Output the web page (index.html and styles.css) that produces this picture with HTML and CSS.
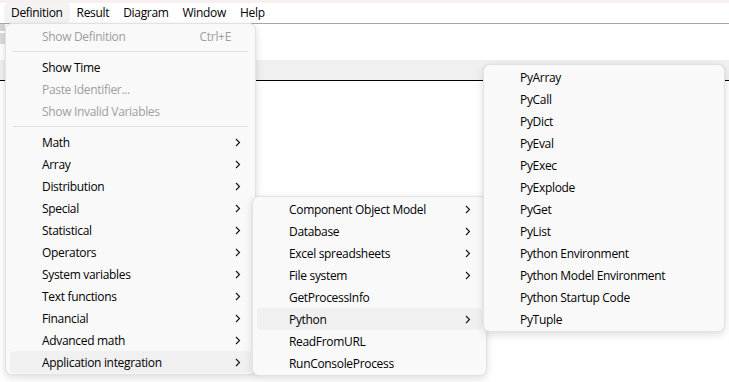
FILE: index.html
```html
<!DOCTYPE html>
<html>
<head>
<meta charset="utf-8">
<link rel="stylesheet" href="styles.css">
</head>
<body>
<div class="window">
  <div class="topstrip"></div>
  <div class="menubar">
    <span class="mb-item active">Definition</span>
    <span class="mb-item">Result</span>
    <span class="mb-item">Diagram</span>
    <span class="mb-item">Window</span>
    <span class="mb-item">Help</span>
  </div>
  <div class="toolbar">
    <div class="tool-edge">
      <span class="edge-a"></span>
      <span class="edge-b"></span>
    </div>
  </div>
  <div class="band"></div>
  <div class="content"></div>
</div>

<div class="menu menu-main">
  <div class="item disabled"><span class="label">Show Definition</span><span class="shortcut">Ctrl+E</span></div>
  <div class="sep"></div>
  <div class="item"><span class="label">Show Time</span></div>
  <div class="item disabled"><span class="label">Paste Identifier...</span></div>
  <div class="item disabled"><span class="label">Show Invalid Variables</span></div>
  <div class="sep"></div>
  <div class="item"><span class="label">Math</span><svg class="arrow" width="6" height="9" viewBox="0 0 6 9"><path d="M1 1 L4.5 4.5 L1 8"/></svg></div>
  <div class="item"><span class="label">Array</span><svg class="arrow" width="6" height="9" viewBox="0 0 6 9"><path d="M1 1 L4.5 4.5 L1 8"/></svg></div>
  <div class="item"><span class="label">Distribution</span><svg class="arrow" width="6" height="9" viewBox="0 0 6 9"><path d="M1 1 L4.5 4.5 L1 8"/></svg></div>
  <div class="item"><span class="label">Special</span><svg class="arrow" width="6" height="9" viewBox="0 0 6 9"><path d="M1 1 L4.5 4.5 L1 8"/></svg></div>
  <div class="item"><span class="label">Statistical</span><svg class="arrow" width="6" height="9" viewBox="0 0 6 9"><path d="M1 1 L4.5 4.5 L1 8"/></svg></div>
  <div class="item"><span class="label">Operators</span><svg class="arrow" width="6" height="9" viewBox="0 0 6 9"><path d="M1 1 L4.5 4.5 L1 8"/></svg></div>
  <div class="item"><span class="label">System variables</span><svg class="arrow" width="6" height="9" viewBox="0 0 6 9"><path d="M1 1 L4.5 4.5 L1 8"/></svg></div>
  <div class="item"><span class="label">Text functions</span><svg class="arrow" width="6" height="9" viewBox="0 0 6 9"><path d="M1 1 L4.5 4.5 L1 8"/></svg></div>
  <div class="item"><span class="label">Financial</span><svg class="arrow" width="6" height="9" viewBox="0 0 6 9"><path d="M1 1 L4.5 4.5 L1 8"/></svg></div>
  <div class="item"><span class="label">Advanced math</span><svg class="arrow" width="6" height="9" viewBox="0 0 6 9"><path d="M1 1 L4.5 4.5 L1 8"/></svg></div>
  <div class="item hover"><span class="label">Application integration</span><svg class="arrow" width="6" height="9" viewBox="0 0 6 9"><path d="M1 1 L4.5 4.5 L1 8"/></svg></div>
</div>

<div class="menu menu-app">
  <div class="item"><span class="label">Component Object Model</span><svg class="arrow" width="6" height="9" viewBox="0 0 6 9"><path d="M1 1 L4.5 4.5 L1 8"/></svg></div>
  <div class="item"><span class="label">Database</span><svg class="arrow" width="6" height="9" viewBox="0 0 6 9"><path d="M1 1 L4.5 4.5 L1 8"/></svg></div>
  <div class="item"><span class="label">Excel spreadsheets</span><svg class="arrow" width="6" height="9" viewBox="0 0 6 9"><path d="M1 1 L4.5 4.5 L1 8"/></svg></div>
  <div class="item"><span class="label">File system</span><svg class="arrow" width="6" height="9" viewBox="0 0 6 9"><path d="M1 1 L4.5 4.5 L1 8"/></svg></div>
  <div class="item"><span class="label">GetProcessInfo</span></div>
  <div class="item hover"><span class="label">Python</span><svg class="arrow" width="6" height="9" viewBox="0 0 6 9"><path d="M1 1 L4.5 4.5 L1 8"/></svg></div>
  <div class="item"><span class="label">ReadFromURL</span></div>
  <div class="item"><span class="label">RunConsoleProcess</span></div>
</div>

<div class="menu menu-py">
  <div class="item"><span class="label">PyArray</span></div>
  <div class="item"><span class="label">PyCall</span></div>
  <div class="item"><span class="label">PyDict</span></div>
  <div class="item"><span class="label">PyEval</span></div>
  <div class="item"><span class="label">PyExec</span></div>
  <div class="item"><span class="label">PyExplode</span></div>
  <div class="item"><span class="label">PyGet</span></div>
  <div class="item"><span class="label">PyList</span></div>
  <div class="item"><span class="label">Python Environment</span></div>
  <div class="item"><span class="label">Python Model Environment</span></div>
  <div class="item"><span class="label">Python Startup Code</span></div>
  <div class="item"><span class="label">PyTuple</span></div>
</div>
</body>
</html>
```

FILE: styles.css
```css
* { box-sizing: border-box; }
html, body {
  margin: 0;
  padding: 0;
  width: 729px;
  height: 382px;
  overflow: hidden;
  background: #ffffff;
  font-family: "Open Sans", "Noto Sans", sans-serif;
  font-size: 12px;
  letter-spacing: -0.32px;
  color: #000000;
}
.window {
  display: flex;
  flex-direction: column;
  height: 382px;
}
.topstrip {
  height: 3px;
  background: #f7f0ef;
}
.menubar {
  height: 21px;
  display: flex;
  align-items: stretch;
  padding-left: 4px;
  background: #ffffff;
  border-bottom: 1px solid #a6a6a6;
}
.mb-item {
  display: flex;
  align-items: center;
  padding: 0 7px;
  line-height: 1;
  border-radius: 4px;
}
.mb-item.active { background: #f3f3f3; }
.toolbar {
  height: 36px;
  background: #ffffff;
  display: flex;
}
.tool-edge {
  width: 5px;
  display: flex;
  flex-direction: column;
  gap: 2px;
}
.edge-a { height: 7px; background: #d4d4d4; }
.edge-b { height: 11px; background: #dcdcdc; }
.band {
  height: 21px;
  background: #f0f0f0;
  border-bottom: 1px solid #000000;
}
.content { flex: 1; background: #ffffff; }

.menu {
  position: absolute;
  background: #f9f9f9;
  border: 1px solid #e2e2e2;
  border-radius: 7px;
  padding: 1px 0;
  box-shadow: 0 3px 9px rgba(0, 0, 0, 0.13), 0 0 2px rgba(0, 0, 0, 0.05);
}
.menu-main { left: 5px; top: 23px; width: 251px; z-index: 1; }
.menu-app { left: 252px; top: 196px; width: 235px; z-index: 2; }
.menu-py { left: 483px; top: 64px; width: 242px; z-index: 3; }

.item {
  height: 22px;
  margin: 0 4px;
  padding: 0 10px 0 32px;
  display: flex;
  align-items: center;
  border-radius: 4px;
  white-space: nowrap;
}
.menu-app .item { padding-right: 11px; }
.item.hover { background: #f0f0f0; }
.item.disabled { color: #9e9e9e; }
.label { flex: 1; }
.shortcut { margin-right: 10px; }
.arrow {
  display: block;
  fill: none;
  stroke: #111111;
  stroke-width: 1.1;
}
.sep {
  height: 9px;
  margin: 0 7px;
  display: flex;
  align-items: center;
}
.sep::before {
  content: "";
  display: block;
  width: 100%;
  height: 1px;
  background: #e0e0e0;
}
```
